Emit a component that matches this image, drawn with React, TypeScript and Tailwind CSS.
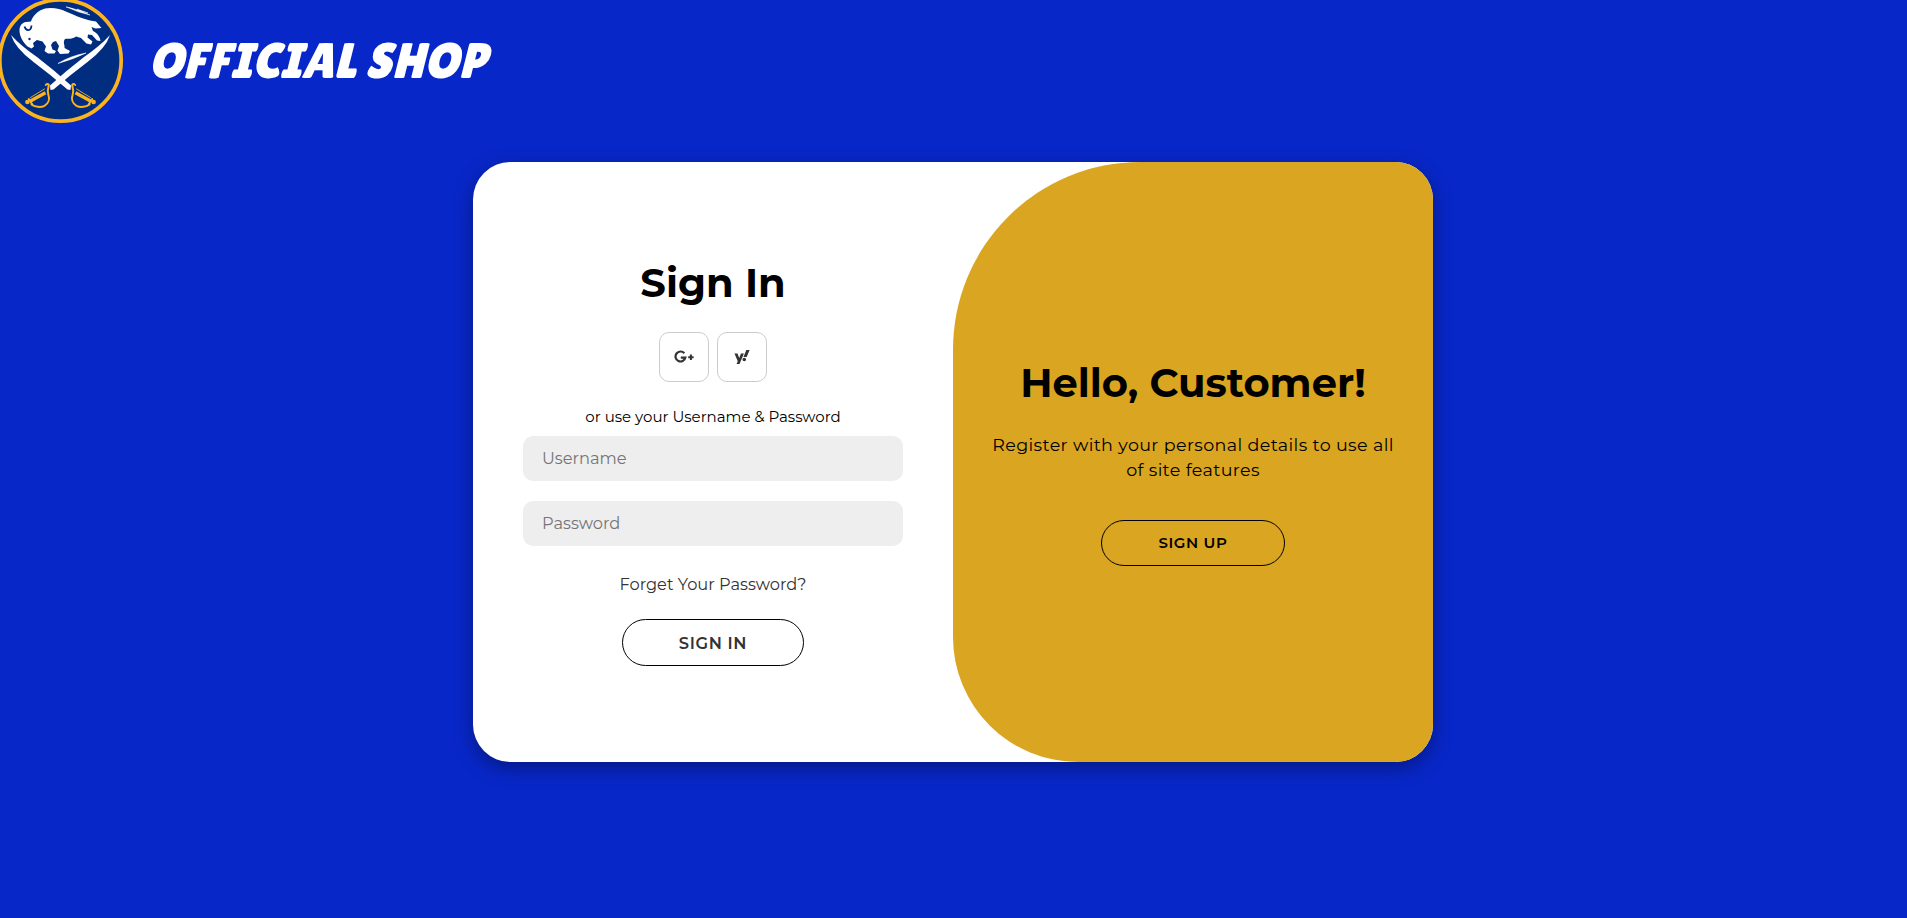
import React from "react";
import { FaYahoo } from "react-icons/fa";

function Hilt() {
  return (
    <g fill="none" stroke="#fcb41e" strokeLinecap="round" strokeLinejoin="round">
      <path d="M45.8 85C47 83.4 49 83.6 48.8 85.5C48 88.5 47 91 48.3 94.5C50 99 48.5 103.5 44.5 105.8C40.5 107.8 35 107 31.5 104.5" strokeWidth="2" />
      <path d="M45.5 92.8L30 101.2" strokeWidth="3.4" strokeLinecap="butt" />
      <path d="M44.5 89L30.5 97.5" strokeWidth="0.9" />
      <path d="M28.8 99L32.3 104.5" strokeWidth="2" />
      <circle cx="27.4" cy="102" r="2.3" fill="#fcb41e" stroke="none" />
    </g>
  );
}

function Logo() {
  return (
    <svg className="h-[124px] w-[124px] shrink-0" viewBox="0 0 124 124">
      <circle cx="60.5" cy="60.5" r="60.7" fill="#002d80" stroke="#fcb41e" strokeWidth="3.7" />
      <path
        d="M19.5 31C19.3 26 22 22.5 26 22L31 21.5C32.5 16 38 10.5 45 8.5C52 7 60 8.5 67 12C74 15 82 18.5 90 20.5L96 21.5L101.5 28L95.5 28.5L91.5 27L93 31C97 33 100 36.5 100.5 41L97 40.5L92 35L88 34.5L87.5 37.5L92.5 41.5L91 44.5L86.5 43.5L81 38L76 36.5C72 39.5 68 38.5 65 39C62.5 42 65 45 64.5 48L70 51L68.5 53.5L60 54L57.5 50.5L59 46L56 41L53 42L51 45L52.5 49.5L56 51L54.5 53.5H48L44.5 51L46 46.5L42.5 41.5L37 40L33 43L34 46.5L31.5 48.5L27.5 46.5C23 42 19.8 37 19.5 31Z"
        fill="#fff"
      />
      <path d="M24.5 26.5C26 31.5 31 31.5 31.5 25.5M36 41Q38.5 44 42 43" stroke="#002d80" strokeWidth="1.8" fill="none" />
      <circle cx="29.5" cy="39" r="1.2" fill="#002d80" />
      <path d="M66 6.8Q77 9 90 15Q78 12.5 66 6.8ZM77 9L88 13L79 10.5ZM58 63.5Q70 56 86 53Q74 59 58 63.5Z" stroke="#fff" strokeWidth="0.5" fill="#fff" />
      <path d="M11 35Q21 46 37 57Q54 70 71 85.5L70.5 90L67.5 89.5Q51 75 33.5 62Q15 48 11 35Z" fill="#fff" />
      <path d="M110 35Q100 46 84 57Q67 70 50 85.5L50.5 90L53.5 89.5Q70 75 87.5 62Q106 48 110 35Z" fill="#fff" />
      <Hilt />
      <g transform="matrix(-1 0 0 1 121 0)">
        <Hilt />
      </g>
    </svg>
  );
}

function GooglePlus() {
  return (
    <svg width="20" height="14" viewBox="0 0 20 14" fill="none" stroke="#333" strokeWidth="2.2">
      <path d="M10.3 3.2A5 5 0 1 0 11.4 7.6H6.8" />
      <path d="M16.9 4.6V10M14.2 7.3H19.6" strokeWidth="2" />
    </svg>
  );
}

const inputClass =
  "h-[45px] w-[380px] shrink-0 rounded-[10px] bg-[#eee] px-[19px] pb-[2px] text-[16.25px] outline-none placeholder:text-[#757575]";

export default function App() {
  return (
    <div className="flex h-[918px] flex-col overflow-hidden bg-[#0827c8] font-['Montserrat','Inter',sans-serif] text-black">
      <header className="flex h-[162px] items-start">
        <Logo />
        <h1 className="mt-[29px] ml-[24px] font-['Lilita_One','Open_Sans',sans-serif] text-[50px] leading-[64px] font-normal whitespace-nowrap text-white italic">
          OFFICIAL SHOP
        </h1>
      </header>
      <main className="ml-[473px] flex h-[600px] w-[960px] shrink-0 overflow-hidden rounded-[37.5px] bg-white shadow-[0_6px_19px_rgba(0,0,0,0.35)]">
        <form className="flex w-[480px] flex-col items-center px-[50px] pt-[96px]">
          <h2 className="text-[40px] leading-[50px] font-bold">Sign In</h2>
          <div className="mt-[24px] flex gap-2">
            <span className="flex size-[50px] items-center justify-center rounded-[10px] border border-[#ccc]">
              <GooglePlus />
            </span>
            <span className="flex size-[50px] items-center justify-center rounded-[10px] border border-[#ccc] text-[#333]">
              <FaYahoo size={16} />
            </span>
          </div>
          <p className="mt-[25px] text-[15px] leading-[20px]">or use your Username &amp; Password</p>
          <input className={`mt-[9px] ${inputClass}`} placeholder="Username" />
          <input className={`mt-[20px] ${inputClass}`} placeholder="Password" type="password" />
          <a className="mt-[28px] text-[16.25px] leading-[20px] text-[#333]">Forget Your Password?</a>
          <button className="mt-[25px] h-[47px] w-[182px] rounded-full border border-black pt-[2px] text-[16.25px] font-semibold tracking-[0.625px] text-[#333]">
            SIGN IN
          </button>
        </form>
        <section className="flex w-[480px] flex-col items-center rounded-tl-[187.5px] rounded-bl-[125px] bg-[#daa520] pt-[196px] text-center">
          <h2 className="text-[40px] leading-[50px] font-bold">Hello, Customer!</h2>
          <p className="mt-[24px] text-[17.5px] leading-[25px] tracking-[0.375px]">
            Register with your personal details to use all
            <br />
            of site features
          </p>
          <button className="mt-[38px] h-[46px] w-[184px] rounded-full border border-black text-[15px] font-semibold tracking-[0.625px]">
            SIGN UP
          </button>
        </section>
      </main>
    </div>
  );
}
